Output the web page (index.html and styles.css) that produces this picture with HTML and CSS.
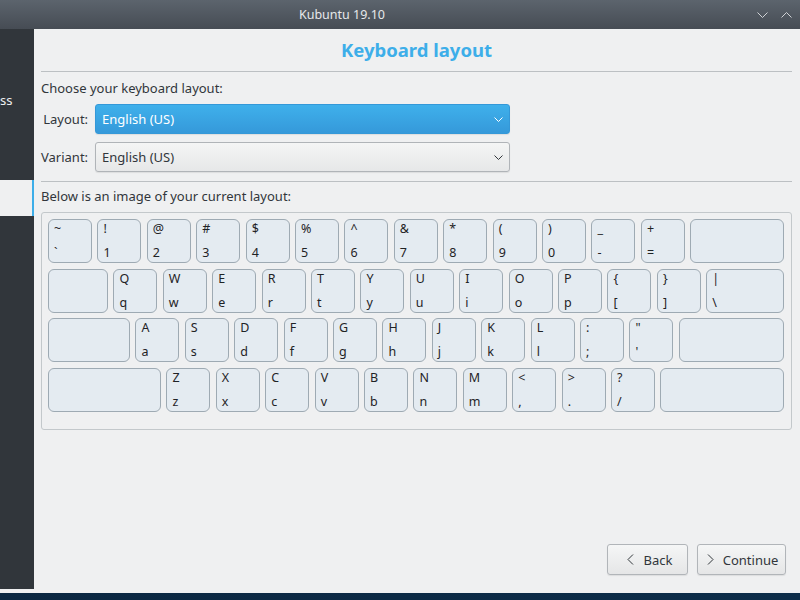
FILE: index.html
```html
<!DOCTYPE html>
<html>
<head>
<meta charset="utf-8">
<link rel="stylesheet" href="styles.css">
</head>
<body>
<div class="screen">
  <div class="window">
    <div class="titlebar">
      <div class="title">Kubuntu 19.10</div>
      <div class="wbtns">
        <svg width="11" height="6" viewBox="0 0 11 6"><path d="M0.5 0.5 L5.5 5.5 L10.5 0.5" fill="none" stroke="#d0d3d6" stroke-width="1"/></svg>
        <svg width="11" height="6" viewBox="0 0 11 6"><path d="M0.5 5.5 L5.5 0.5 L10.5 5.5" fill="none" stroke="#d0d3d6" stroke-width="1"/></svg>
      </div>
    </div>
    <div class="body">
      <div class="sidebar">
        <div class="side-text">ss</div>
        <div class="side-item active"></div>
      </div>
      <div class="main">
        <h1 class="heading">Keyboard layout</h1>
        <div class="rule"></div>
        <p class="prompt first">Choose your keyboard layout:</p>
        <div class="form">
          <span class="label">Layout:</span>
          <div class="combo combo-active">English (US)<svg width="9" height="5" viewBox="0 0 9 5"><path d="M0.5 0.5 L4.5 4.5 L8.5 0.5" fill="none" stroke="#ffffff" stroke-width="1"/></svg></div>
          <span class="label">Variant:</span>
          <div class="combo">English (US)<svg width="9" height="5" viewBox="0 0 9 5"><path d="M0.5 0.5 L4.5 4.5 L8.5 0.5" fill="none" stroke="#31363b" stroke-width="1"/></svg></div>
        </div>
        <div class="rule rule2"></div>
        <p class="prompt second">Below is an image of your current layout:</p>
        <div class="keyboard">
          <div class="row">
            <div class="key"><span>~</span><span>`</span></div>
            <div class="key"><span>!</span><span>1</span></div>
            <div class="key"><span>@</span><span>2</span></div>
            <div class="key"><span>#</span><span>3</span></div>
            <div class="key"><span>$</span><span>4</span></div>
            <div class="key"><span>%</span><span>5</span></div>
            <div class="key"><span>^</span><span>6</span></div>
            <div class="key"><span>&amp;</span><span>7</span></div>
            <div class="key"><span>*</span><span>8</span></div>
            <div class="key"><span>(</span><span>9</span></div>
            <div class="key"><span>)</span><span>0</span></div>
            <div class="key"><span>_</span><span>-</span></div>
            <div class="key"><span>+</span><span>=</span></div>
            <div class="key wide"></div>
          </div>
          <div class="row">
            <div class="key tab"></div>
            <div class="key"><span>Q</span><span>q</span></div>
            <div class="key"><span>W</span><span>w</span></div>
            <div class="key"><span>E</span><span>e</span></div>
            <div class="key"><span>R</span><span>r</span></div>
            <div class="key"><span>T</span><span>t</span></div>
            <div class="key"><span>Y</span><span>y</span></div>
            <div class="key"><span>U</span><span>u</span></div>
            <div class="key"><span>I</span><span>i</span></div>
            <div class="key"><span>O</span><span>o</span></div>
            <div class="key"><span>P</span><span>p</span></div>
            <div class="key"><span>{</span><span>[</span></div>
            <div class="key"><span>}</span><span>]</span></div>
            <div class="key wide"><span>|</span><span>\</span></div>
          </div>
          <div class="row">
            <div class="key caps"></div>
            <div class="key"><span>A</span><span>a</span></div>
            <div class="key"><span>S</span><span>s</span></div>
            <div class="key"><span>D</span><span>d</span></div>
            <div class="key"><span>F</span><span>f</span></div>
            <div class="key"><span>G</span><span>g</span></div>
            <div class="key"><span>H</span><span>h</span></div>
            <div class="key"><span>J</span><span>j</span></div>
            <div class="key"><span>K</span><span>k</span></div>
            <div class="key"><span>L</span><span>l</span></div>
            <div class="key"><span>:</span><span>;</span></div>
            <div class="key"><span>"</span><span>'</span></div>
            <div class="key wide"></div>
          </div>
          <div class="row">
            <div class="key shift"></div>
            <div class="key"><span>Z</span><span>z</span></div>
            <div class="key"><span>X</span><span>x</span></div>
            <div class="key"><span>C</span><span>c</span></div>
            <div class="key"><span>V</span><span>v</span></div>
            <div class="key"><span>B</span><span>b</span></div>
            <div class="key"><span>N</span><span>n</span></div>
            <div class="key"><span>M</span><span>m</span></div>
            <div class="key"><span>&lt;</span><span>,</span></div>
            <div class="key"><span>&gt;</span><span>.</span></div>
            <div class="key"><span>?</span><span>/</span></div>
            <div class="key wide"></div>
          </div>
        </div>
        <div class="actions">
          <div class="btn btn-back"><svg width="7" height="11" viewBox="0 0 7 11"><path d="M6 0.5 L1 5.5 L6 10.5" fill="none" stroke="#31363b" stroke-width="1"/></svg><span>Back</span></div>
          <div class="btn btn-next"><svg width="7" height="11" viewBox="0 0 7 11"><path d="M1 0.5 L6 5.5 L1 10.5" fill="none" stroke="#31363b" stroke-width="1"/></svg><span>Continue</span></div>
        </div>
      </div>
    </div>
  </div>
  <div class="desktop"></div>
</div>
</body>
</html>
```
FILE: styles.css
```css
* { box-sizing: border-box; }
html, body { margin: 0; padding: 0; }
body { font-family: "Noto Sans", "DejaVu Sans", sans-serif; }

.screen {
  width: 800px;
  height: 600px;
  overflow: hidden;
  background: #0c2a44;
  display: flex;
  flex-direction: column;
}

.window {
  height: 593px;
  display: flex;
  flex-direction: column;
  background: #eff0f1;
}

.desktop {
  flex: 1;
  background: linear-gradient(90deg, #0b2741, #0d2d49);
}

.titlebar {
  height: 29px;
  flex: none;
  display: flex;
  align-items: center;
  background: linear-gradient(#5c646d, #464c54);
  color: #e6e8ea;
  font-size: 12.5px;
}

.title {
  width: 684px;
  text-align: center;
}

.wbtns {
  display: flex;
  gap: 13px;
  margin-left: 73px;
  margin-top: 1px;
}
.wbtns svg { display: block; }

.body {
  flex: 1;
  display: flex;
}

.sidebar {
  width: 34px;
  flex: none;
  background: #31363b;
  margin-bottom: 4px;
  display: flex;
  flex-direction: column;
}

.side-text {
  margin-top: 62px;
  height: 18px;
  line-height: 18px;
  font-size: 13px;
  color: #eff0f1;
}

.side-item.active {
  margin-top: 71px;
  height: 36px;
  background: #eff0f1;
  border-right: 2px solid #3daee9;
}

.main {
  flex: 1;
  display: flex;
  flex-direction: column;
  padding: 0 8px 0 7px;
}

.heading {
  margin: 7px 0 7px;
  font-size: 18.5px;
  line-height: 28px;
  font-weight: 700;
  color: #3daee9;
  text-align: center;
}

.rule {
  height: 1px;
  background: #bcc0c3;
}

.prompt {
  margin: 0;
  font-size: 13px;
  line-height: 18px;
  color: #31363b;
}
.prompt.first { margin-top: 7px; }
.prompt.second { margin-top: 5px; }

.form {
  margin-top: 7px;
  display: grid;
  grid-template-columns: auto 415px;
  justify-content: start;
  column-gap: 7px;
  row-gap: 8px;
  align-items: center;
}

.label {
  justify-self: end;
  font-size: 13px;
  color: #31363b;
}

.combo {
  height: 30px;
  display: flex;
  align-items: center;
  justify-content: space-between;
  padding: 0 6px 0 6px;
  border: 1px solid #b0b4b8;
  border-radius: 3px;
  background: linear-gradient(#f4f5f5, #e6e7e8);
  font-size: 13px;
  color: #31363b;
  box-shadow: 0 1px 1px rgba(0, 0, 0, 0.08);
}

.combo-active {
  border-color: #3498d8;
  background: linear-gradient(#3fb0eb, #3599da);
  color: #ffffff;
}

.combo svg { display: block; }

.rule2 { margin-top: 9px; }

.keyboard {
  margin-top: 7px;
  width: 751px;
  border: 1px solid #c3c8cb;
  border-radius: 3px;
  padding: 6px 7px 17px 6px;
  display: flex;
  flex-direction: column;
  gap: 5.67px;
}

.row {
  display: flex;
  gap: 5.42px;
}

.key {
  flex: none;
  width: 44px;
  height: 44px;
  border: 1px solid #9eaab3;
  border-radius: 6px;
  background: #e4ebf1;
  display: flex;
  flex-direction: column;
  justify-content: space-between;
  padding: 1px 5px 1px;
  font-size: 12.5px;
  line-height: 16px;
  color: #1f2326;
}

.key.tab { width: 60px; }
.key.caps { width: 82px; }
.key.shift { width: 113px; }
.key.wide { flex: 1 1 auto; width: auto; }

.actions {
  margin-top: auto;
  display: flex;
  justify-content: flex-end;
  gap: 9px;
  padding: 0 6px 18px 0;
}

.btn {
  height: 31px;
  display: flex;
  align-items: center;
  justify-content: center;
  gap: 8px;
  border: 1px solid #b1b5b9;
  border-radius: 3px;
  background: linear-gradient(#f5f6f6, #e5e6e7);
  box-shadow: 0 1px 1px rgba(0, 0, 0, 0.08);
  font-size: 13px;
  color: #31363b;
}
.btn svg { display: block; }
.btn-back { width: 81px; gap: 10px; padding-left: 4px; }
.btn-next { width: 89px; gap: 9px; padding-left: 2px; }
```
